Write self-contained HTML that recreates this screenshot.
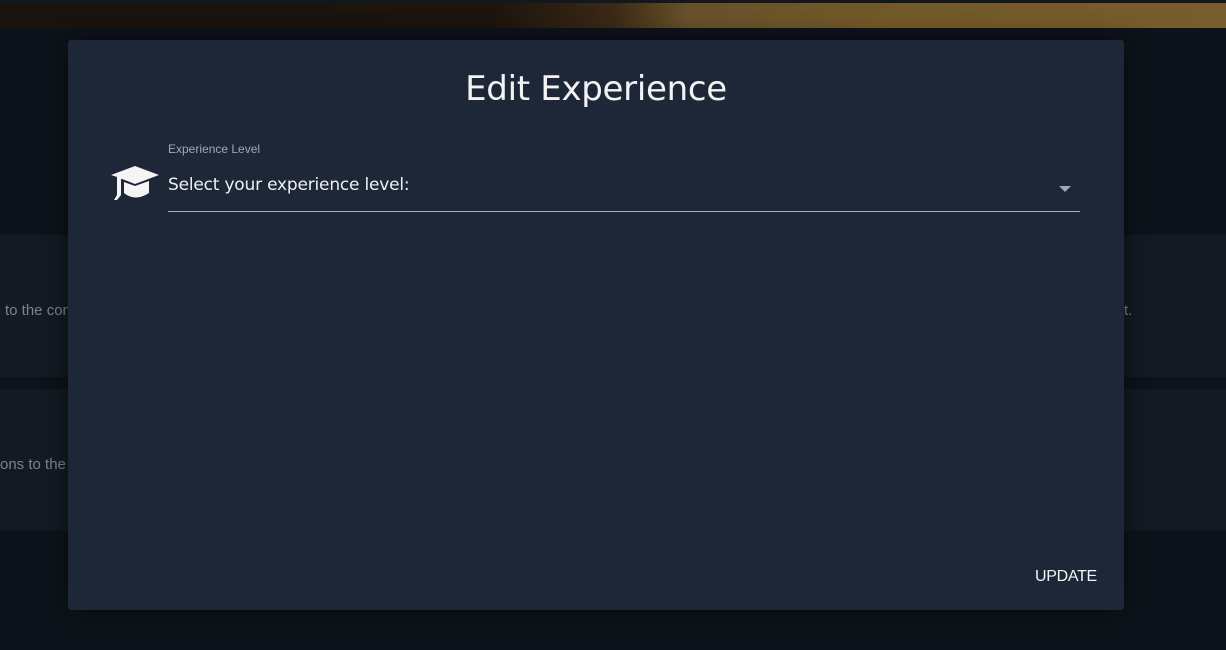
<!DOCTYPE html>
<html><head><style>
*{margin:0;padding:0;box-sizing:border-box}
body{width:1226px;height:650px;background:#0e131b;position:relative;overflow:hidden;font-family:"Liberation Sans","DejaVu Sans",sans-serif}
.banner{position:absolute;left:0;top:3px;width:1226px;height:25px;background:linear-gradient(90deg,#1a130e 0%,#1c140d 40%,#3a2915 50%,#67502a 56%,#715829 70%,#785d2d 100%)}
.top{position:absolute;left:0;top:0;width:1226px;height:3px;background:#111820}
.card{position:absolute;left:0;width:1226px;background:#141a23;color:#7d828a;font-size:15px}
.modal{position:absolute;left:68px;top:40px;width:1056px;height:570px;background:#1d2738;border-radius:3px;box-shadow:0 0 24px rgba(0,0,0,.5)}
h1{position:absolute;left:0;width:100%;top:29px;text-align:center;color:#f3f3f3;font-weight:normal;font-size:34px;font-family:"DejaVu Sans",sans-serif;letter-spacing:-0.3px}
.lbl{position:absolute;left:100px;top:102px;font-size:12px;color:#a2a8b2}
.sel{position:absolute;left:100px;top:135px;color:#eef0f3;font-family:"DejaVu Sans",sans-serif;font-size:17px;letter-spacing:-0.2px}
.line{position:absolute;left:100px;top:171px;width:912px;height:1px;background:#a9adb4}
.arr{position:absolute;left:991px;top:146px;width:0;height:0;border-left:6px solid transparent;border-right:6px solid transparent;border-top:6px solid #a4a8ae}
.btn{position:absolute;left:967px;top:528px;color:#f3f3f3;font-size:16px;letter-spacing:-0.3px}
</style></head><body>
<div class="top"></div>
<div class="banner"></div>
<div class="card" style="top:235px;height:142px"><span style="position:absolute;left:5px;top:67px">to the con</span><span style="position:absolute;left:1124px;top:67px">t.</span></div>
<div class="card" style="top:389px;height:141px"><span style="position:absolute;left:0;top:67px">ons to the c</span></div>
<div class="modal">
<h1>Edit Experience</h1>
<svg style="position:absolute;left:43px;top:125px" width="49" height="36" viewBox="0 0 49 36"><path d="M24 1 L48 10 L24 19 L11 14 L10 14 L10 30 L6 35 L3 35 L6 30 L6 12 L0 10 Z" fill="#f5f5f5"/><path d="M13 17 L24 21 L38 16 L38 28 Q24 37 13 28 Z" fill="#f5f5f5"/></svg>
<div class="lbl">Experience Level</div>
<div class="sel">Select your experience level:</div>
<div class="arr"></div>
<div class="line"></div>
<div class="btn">UPDATE</div>
</div>
</body></html>
